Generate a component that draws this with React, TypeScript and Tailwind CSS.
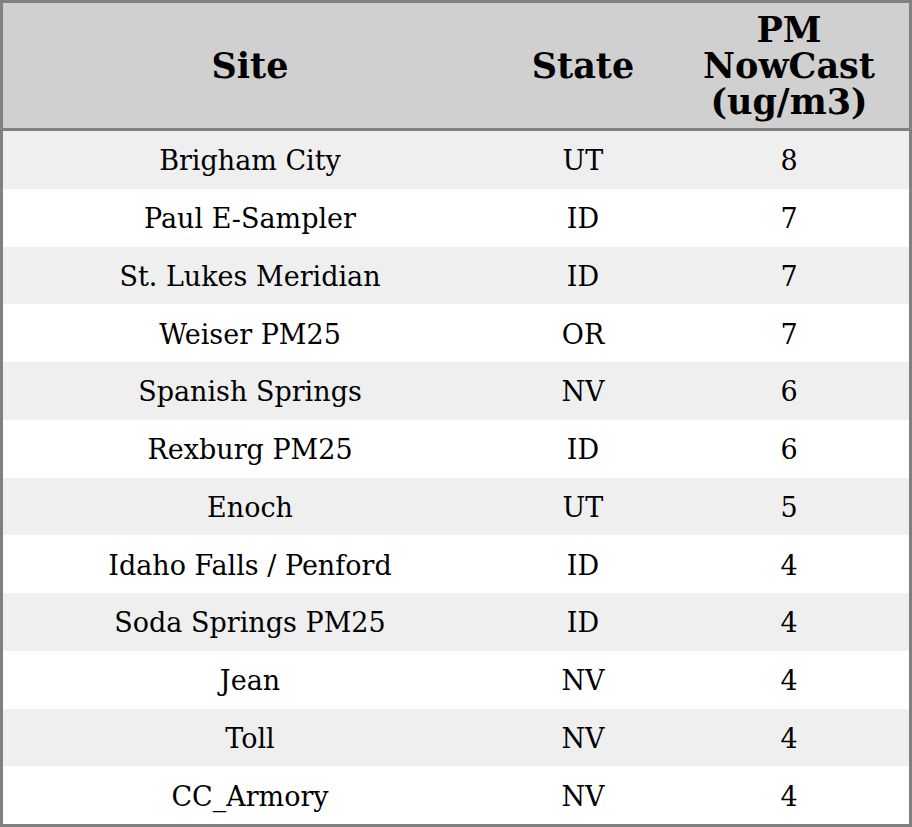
import React from 'react';

type Row = { site: string; state: string; pm: number };

const rows: Row[] = [
  { site: 'Brigham City', state: 'UT', pm: 8 },
  { site: 'Paul E-Sampler', state: 'ID', pm: 7 },
  { site: 'St. Lukes Meridian', state: 'ID', pm: 7 },
  { site: 'Weiser PM25', state: 'OR', pm: 7 },
  { site: 'Spanish Springs', state: 'NV', pm: 6 },
  { site: 'Rexburg PM25', state: 'ID', pm: 6 },
  { site: 'Enoch', state: 'UT', pm: 5 },
  { site: 'Idaho Falls / Penford', state: 'ID', pm: 4 },
  { site: 'Soda Springs PM25', state: 'ID', pm: 4 },
  { site: 'Jean', state: 'NV', pm: 4 },
  { site: 'Toll', state: 'NV', pm: 4 },
  { site: 'CC_Armory', state: 'NV', pm: 4 },
];

const cols = 'grid grid-cols-[494px_172px_240px]';

export default function App() {
  return (
    <div className="w-[912px] h-[827px] border-[3px] border-[#808080] bg-white text-black font-['DejaVu_Serif',serif]">
      <div className={`${cols} h-[128px] bg-[#d0d0d0] border-b-[3px] border-[#808080] items-center text-center text-[35px] font-bold leading-[36px]`}>
        <div>Site</div>
        <div>State</div>
        <div>
          PM
          <br />
          NowCast
          <br />
          (ug/m3)
        </div>
      </div>
      {rows.map((r, i) => (
        <div
          key={r.site}
          className={`${cols} h-[57.75px] items-center text-center text-[27px] leading-[31px] pt-[2px] ${i % 2 === 0 ? 'bg-[#efefef]' : 'bg-white'}`}
        >
          <div>{r.site}</div>
          <div>{r.state}</div>
          <div>{r.pm}</div>
        </div>
      ))}
    </div>
  );
}
